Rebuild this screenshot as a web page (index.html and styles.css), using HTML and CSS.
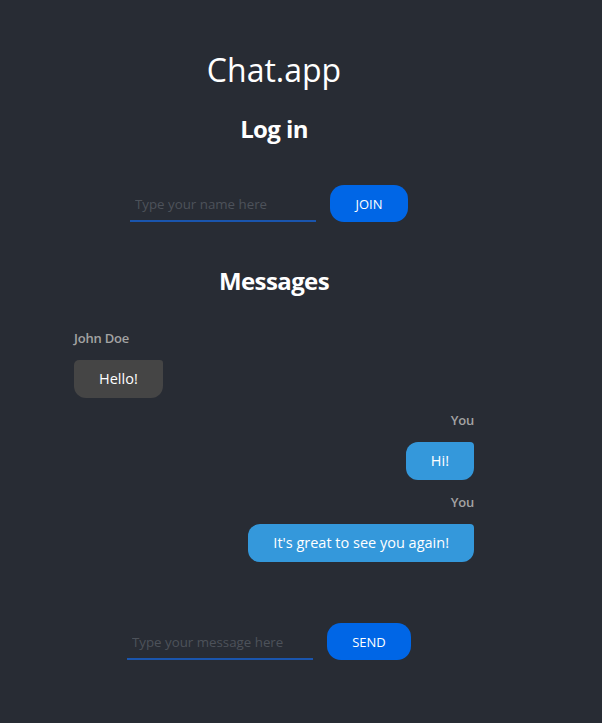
FILE: index.html
```html
<!DOCTYPE html>
<html lang="en">
<head>
<meta charset="utf-8">
<title>Chat.app</title>
<link rel="stylesheet" href="styles.css">
</head>
<body>
<main class="app">
  <h1 class="title">Chat.app</h1>
  <h2 class="heading">Log in</h2>
  <form class="entry entry-join">
    <input class="field" type="text" placeholder="Type your name here">
    <button class="btn" type="button">JOIN</button>
  </form>
  <h2 class="heading heading-messages">Messages</h2>
  <div class="messages">
    <div class="msg msg-other">
      <div class="author">John Doe</div>
      <div class="bubble">Hello!</div>
    </div>
    <div class="msg msg-self">
      <div class="author">You</div>
      <div class="bubble">Hi!</div>
    </div>
    <div class="msg msg-self">
      <div class="author">You</div>
      <div class="bubble">It's great to see you again!</div>
    </div>
  </div>
  <form class="entry entry-send">
    <input class="field" type="text" placeholder="Type your message here">
    <button class="btn btn-send" type="button">SEND</button>
  </form>
</main>
</body>
</html>
```
FILE: styles.css
```css
html, body {
  margin: 0;
  padding: 0;
  background: #282c34;
  height: 100%;
}
body {
  font-family: "Open Sans", "DejaVu Sans", sans-serif;
  color: #ffffff;
}
.app {
  width: 400px;
  margin-left: 74px;
  padding-top: 48px;
  display: flex;
  flex-direction: column;
  align-items: center;
}
.title {
  margin: 0;
  font-size: 32px;
  font-weight: 400;
  line-height: 44px;
}
.heading {
  margin: 21px 0 0;
  font-size: 24px;
  font-weight: 700;
  line-height: 32px;
  letter-spacing: -0.6px;
}
.heading-messages {
  margin-top: 43px;
}
.entry {
  display: flex;
  align-items: flex-end;
  gap: 14px;
  margin-right: 10px;
}
.entry-join {
  margin-top: 40px;
}
.entry-send {
  margin-top: 48px;
}
.field {
  width: 186px;
  box-sizing: border-box;
  height: 36px;
  background: transparent;
  border: none;
  border-bottom: 2px solid #1a55ad;
  padding: 1px 5px 0;
  color: #ffffff;
  font-family: "Open Sans", "DejaVu Sans", sans-serif;
  font-size: 13.3px;
  outline: none;
}
.field::placeholder {
  color: #4d525a;
}
.btn {
  width: 78px;
  height: 37px;
  border: none;
  border-radius: 14px;
  background: #0066e6;
  color: #ffffff;
  font-family: "Open Sans", "DejaVu Sans", sans-serif;
  font-size: 13px;
  padding: 0;
}
.btn-send {
  width: 84px;
}
.messages {
  align-self: stretch;
  display: flex;
  flex-direction: column;
  margin-top: 32px;
}
.msg {
  display: flex;
  flex-direction: column;
  align-items: flex-start;
  margin-bottom: 13px;
}
.msg-self {
  align-items: flex-end;
}
.author {
  font-size: 13px;
  font-weight: 600;
  color: #a3a3a3;
  line-height: 18px;
  margin-bottom: 13px;
  letter-spacing: -0.2px;
}
.bubble {
  font-size: 14.5px;
  line-height: 20px;
  padding: 9px 25px;
  border-radius: 5px 3px 12px 12px;
  background: #454545;
}
.msg-self .bubble {
  background: #3498db;
  border-radius: 12px 4px 12px 12px;
}
```
